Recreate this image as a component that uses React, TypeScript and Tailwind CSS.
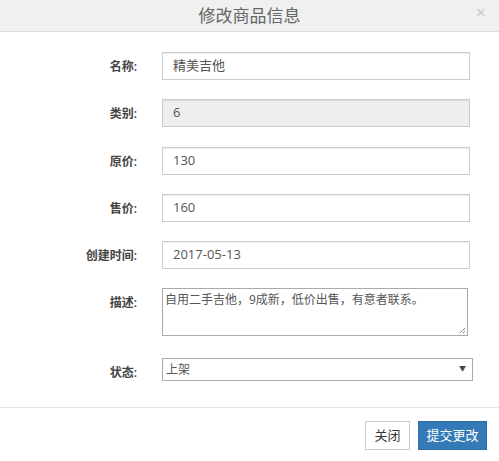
import React from 'react';

const font = { fontFamily: '"Open Sans", "Noto Sans CJK SC", sans-serif' };

const Row = ({ label, children, className = '' }: { label: string; children: React.ReactNode; className?: string }) => (
  <div className={`flex flex-row ${className}`}>
    <div className="w-[137px] shrink-0 text-right text-[12px] font-semibold text-[#444] pt-[6px]">{label}</div>
    <div className="ml-[25px]">{children}</div>
  </div>
);

const Field = ({ value, disabled = false }: { value: string; disabled?: boolean }) => (
  <div
    className={`w-[308px] h-[28px] border border-[#ccc] px-[10px] flex items-center text-[13px] text-[#555] shadow-[inset_0_1px_1px_rgba(0,0,0,0.075)] ${
      disabled ? 'bg-[#eee]' : 'bg-white'
    }`}
  >
    {value}
  </div>
);

const App = () => {
  return (
    <div className="w-[499px] h-[461px] bg-white flex flex-col overflow-hidden" style={font}>
      {/* HEADER */}
      <div className="relative h-[32px] bg-[#f0f0f0] border-b border-[#ddd] flex items-center justify-center shrink-0">
        <p className="text-[17px] text-[#666]">修改商品信息</p>
        <span className="absolute right-[13px] top-[3px] text-[18px] text-[#c8c8c8] leading-none">×</span>
      </div>

      {/* BODY */}
      <div className="flex flex-col pt-[20px]">
        <Row label="名称:">
          <Field value="精美吉他" />
        </Row>
        <Row label="类别:" className="mt-[19px]">
          <Field value="6" disabled />
        </Row>
        <Row label="原价:" className="mt-[20px]">
          <Field value="130" />
        </Row>
        <Row label="售价:" className="mt-[19px]">
          <Field value="160" />
        </Row>
        <Row label="创建时间:" className="mt-[19px]">
          <Field value="2017-05-13" />
        </Row>
        <Row label="描述:" className="mt-[19px]">
          <div className="relative w-[306px] h-[48px] border border-[#aaa] px-[2px] pt-[2px] text-[12px] text-[#555] bg-white">
            自用二手吉他，9成新，低价出售，有意者联系。
            <svg className="absolute right-[1px] bottom-[1px]" width="7" height="7" viewBox="0 0 7 7">
              <path d="M6 1L1 6M6 4L4 6" stroke="#888" strokeWidth="1" />
            </svg>
          </div>
        </Row>
        <Row label="状态:" className="mt-[22px]">
          <div className="w-[311px] h-[23px] border border-[#aaa] flex items-center justify-between px-[3px] text-[12px] text-[#555] bg-white">
            <span>上架</span>
            <span className="text-[7px] text-[#444] pr-[3px]">▼</span>
          </div>
        </Row>
      </div>

      {/* FOOTER */}
      <div className="mt-[25px] border-t border-[#e5e5e5] flex flex-row justify-end gap-[8px] pt-[13px] pr-[12px]">
        <button className="h-[29px] w-[45px] border border-[#ccc] bg-white text-[13px] text-[#333]">关闭</button>
        <button className="h-[29px] w-[69px] border border-[#2e6da4] bg-[#337ab7] text-[13px] text-white">提交更改</button>
      </div>
    </div>
  );
};

export default App;
